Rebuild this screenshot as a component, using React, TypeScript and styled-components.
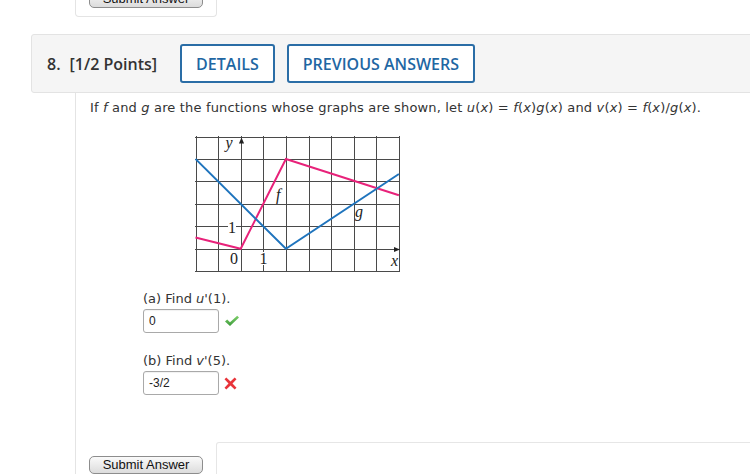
import React from "react";
import styled, { createGlobalStyle } from "styled-components";

const GlobalStyle = createGlobalStyle`
  html, body { margin: 0; padding: 0; background: #ffffff; overflow: hidden; }
  body { font-family: "DejaVu Sans", Verdana, sans-serif; color: #333; }
`;

const Page = styled.div`
  width: 750px;
  height: 474px;
  padding-left: 31px;
  box-sizing: border-box;
  overflow: hidden;
`;

const PrevFooter = styled.div`
  margin-left: 44px;
  width: 142px;
  height: 17px;
  box-sizing: border-box;
  border: 1px solid #e4e4e4;
  border-top: none;
  border-radius: 0 0 4px 4px;
  padding-left: 13px;
  overflow: hidden;
  display: flex;
  align-items: flex-end;
  padding-bottom: 9px;
`;

const SubmitButton = styled.button<{ $cut?: boolean }>`
  width: 114px;
  height: 18px;
  flex: none;
  box-sizing: border-box;
  border: 1px solid #8d8d8d;
  border-radius: 5px;
  background: linear-gradient(#fafafa, #dcdcdc);
  font-family: "Liberation Sans", Arial, sans-serif;
  font-size: 13px;
  color: #111;
  padding: 0;
  line-height: 16px;
  margin-bottom: ${(p) => (p.$cut ? "-1px" : "0")};
`;

const Header = styled.div`
  margin-top: 17px;
  margin-right: -40px;
  height: 59px;
  box-sizing: border-box;
  background: #f5f5f5;
  border: 1px solid #e3e3e3;
  border-radius: 3px;
  display: flex;
  align-items: center;
  padding-left: 15px;
  font-family: "Open Sans", sans-serif;
`;

const QNum = styled.span`
  font-size: 16px;
  font-weight: 600;
  color: #333;
  margin-right: 9px;
`;

const Points = styled.span`
  font-size: 16px;
  font-weight: 600;
  color: #333;
  margin-right: 23px;
`;

const OutlineButton = styled.button`
  height: 39px;
  box-sizing: border-box;
  border: 2px solid #2a6da6;
  border-radius: 3px;
  background: #fff;
  color: #1f67a3;
  font-family: "Open Sans", sans-serif;
  font-size: 16px;
  font-weight: 600;
  padding: 0 14px;
  margin-right: 12px;
`;

const Body = styled.div`
  margin-left: 44px;
  border-left: 1px solid #e4e4e4;
  padding-left: 14px;
  padding-top: 7px;
  height: 381px;
  box-sizing: border-box;
  display: flex;
  flex-direction: column;
`;

const Prompt = styled.div`
  font-size: 13px;
  line-height: 16px;
  color: #333;
  white-space: nowrap;
  letter-spacing: 0.16px;
`;

const Var = styled.i`
  font-style: italic;
`;

const GraphWrap = styled.div`
  margin-top: 20px;
  margin-left: 105px;
  width: 206px;
  height: 137px;
`;

const Part = styled.div<{ $top: number }>`
  margin-top: ${(p) => p.$top}px;
  margin-left: 53px;
  display: flex;
  flex-direction: column;
  gap: 2px;
`;

const PartLabel = styled.div`
  font-size: 13px;
  line-height: 16px;
  color: #333;
`;

const AnswerRow = styled.div`
  display: flex;
  align-items: center;
  gap: 5px;
`;

const AnswerBox = styled.div`
  width: 76px;
  height: 24px;
  box-sizing: border-box;
  border: 1px solid #a9a9a9;
  border-radius: 3px;
  padding-left: 5px;
  font-family: "Liberation Sans", Arial, sans-serif;
  font-size: 12px;
  line-height: 22px;
  color: #222;
  box-shadow: inset 0 1px 1px rgba(0, 0, 0, 0.06);
`;

const FooterRow = styled.div`
  margin-top: auto;
  margin-left: -1px;
  display: flex;
  align-items: flex-end;
  gap: 13px;
`;

const FooterPanel = styled.div`
  flex: 1;
  height: 31px;
  margin-right: -40px;
  border: 1px solid #e6e6e6;
  border-bottom: none;
  border-radius: 3px 0 0 0;
`;

const Check = () => (
  <svg width="16" height="12" viewBox="0 0 16 12">
    <defs>
      <linearGradient id="gck" x1="0" y1="0" x2="0" y2="1">
        <stop offset="0" stopColor="#7fd06b" />
        <stop offset="1" stopColor="#3c9a3a" />
      </linearGradient>
    </defs>
    <path d="M1 6.5 L3.2 4.6 L6 7.2 L13.2 0.8 L15 2.6 L6 11 Z" fill="url(#gck)" />
  </svg>
);

const Cross = () => (
  <svg width="13" height="13" viewBox="0 0 13 13">
    <path
      d="M2.3 0.5 L6.5 4.5 L10.7 0.5 L12.5 2.3 L8.5 6.5 L12.5 10.7 L10.7 12.5 L6.5 8.5 L2.3 12.5 L0.5 10.7 L4.5 6.5 L0.5 2.3 Z"
      fill="#e8343a"
    />
  </svg>
);

const CW = 22.6;
const CH = 22.45;
const X = (x: number) => 0.5 + (x + 2) * CW;
const Y = (y: number) => 0.5 + (5 - y) * CH;

const Graph = () => {
  const vlines = Array.from({ length: 10 }, (_, i) => i - 2);
  const hlines = Array.from({ length: 7 }, (_, i) => i - 1);
  const pts = (arr: [number, number][]) => arr.map(([a, b]) => `${X(a)},${Y(b)}`).join(" ");
  return (
    <svg width="206" height="137" viewBox="0 0 206 137">
      {vlines.map((v) => (
        <line key={"v" + v} x1={Math.round(X(v)) + 0.5} y1={0} x2={Math.round(X(v)) + 0.5} y2={136} stroke="#4a4a4a" strokeWidth="1" />
      ))}
      {hlines.map((h) => (
        <line key={"h" + h} x1={0} y1={Math.round(Y(h)) + 0.5} x2={205} y2={Math.round(Y(h)) + 0.5} stroke="#4a4a4a" strokeWidth="1" />
      ))}
      <path d={`M${Math.round(X(0)) + 0.5} 1.5 l-2.6 6 l5.2 0 Z`} fill="#222" />
      <path d={`M205 ${Math.round(Y(0)) + 0.5} l-6 -2.6 l0 5.2 Z`} fill="#222" />
      <polyline points={pts([[-2, 0.5], [0, 0], [2, 4], [7, 2.38]])} fill="none" stroke="#e8227a" strokeWidth="2" />
      <polyline points={pts([[-2, 4], [2, 0], [7, 3.33]])} fill="none" stroke="#1f74bd" strokeWidth="2" />
      <g fontFamily="'Liberation Serif', 'Times New Roman', serif" fontSize="16" fill="#222">
        <text x="30.5" y="12" fontStyle="italic">y</text>
        <rect x="33" y="86" width="8" height="9" fill="#fff" />
        <text x="33" y="97">1</text>
        <rect x="35" y="116" width="9" height="13" fill="#fff" />
        <text x="35" y="128">0</text>
        <rect x="64" y="116" width="9" height="13" fill="#fff" />
        <text x="64.5" y="128">1</text>
        <text x="196" y="130" fontStyle="italic">x</text>
        <text x="81" y="64" fontStyle="italic">f</text>
        <text x="160" y="81" fontStyle="italic">g</text>
      </g>
    </svg>
  );
};

export default function App() {
  return (
    <>
      <GlobalStyle />
      <Page>
        <PrevFooter>
          <SubmitButton $cut>Submit Answer</SubmitButton>
        </PrevFooter>
        <Header>
          <QNum>8.</QNum>
          <Points>[1/2 Points]</Points>
          <OutlineButton>DETAILS</OutlineButton>
          <OutlineButton>PREVIOUS ANSWERS</OutlineButton>
        </Header>
        <Body>
          <Prompt>
            If <Var>f</Var> and <Var>g</Var> are the functions whose graphs are shown, let <Var>u</Var>(<Var>x</Var>) = <Var>f</Var>(<Var>x</Var>)<Var>g</Var>(<Var>x</Var>) and <Var>v</Var>(<Var>x</Var>) = <Var>f</Var>(<Var>x</Var>)/<Var>g</Var>(<Var>x</Var>).
          </Prompt>
          <GraphWrap>
            <Graph />
          </GraphWrap>
          <Part $top={18}>
            <PartLabel>
              (a) Find <Var>u</Var>'(1).
            </PartLabel>
            <AnswerRow>
              <AnswerBox>0</AnswerBox>
              <Check />
            </AnswerRow>
          </Part>
          <Part $top={20}>
            <PartLabel>
              (b) Find <Var>v</Var>'(5).
            </PartLabel>
            <AnswerRow>
              <AnswerBox>-3/2</AnswerBox>
              <Cross />
            </AnswerRow>
          </Part>
          <FooterRow>
            <SubmitButton>Submit Answer</SubmitButton>
            <FooterPanel />
          </FooterRow>
        </Body>
      </Page>
    </>
  );
}
